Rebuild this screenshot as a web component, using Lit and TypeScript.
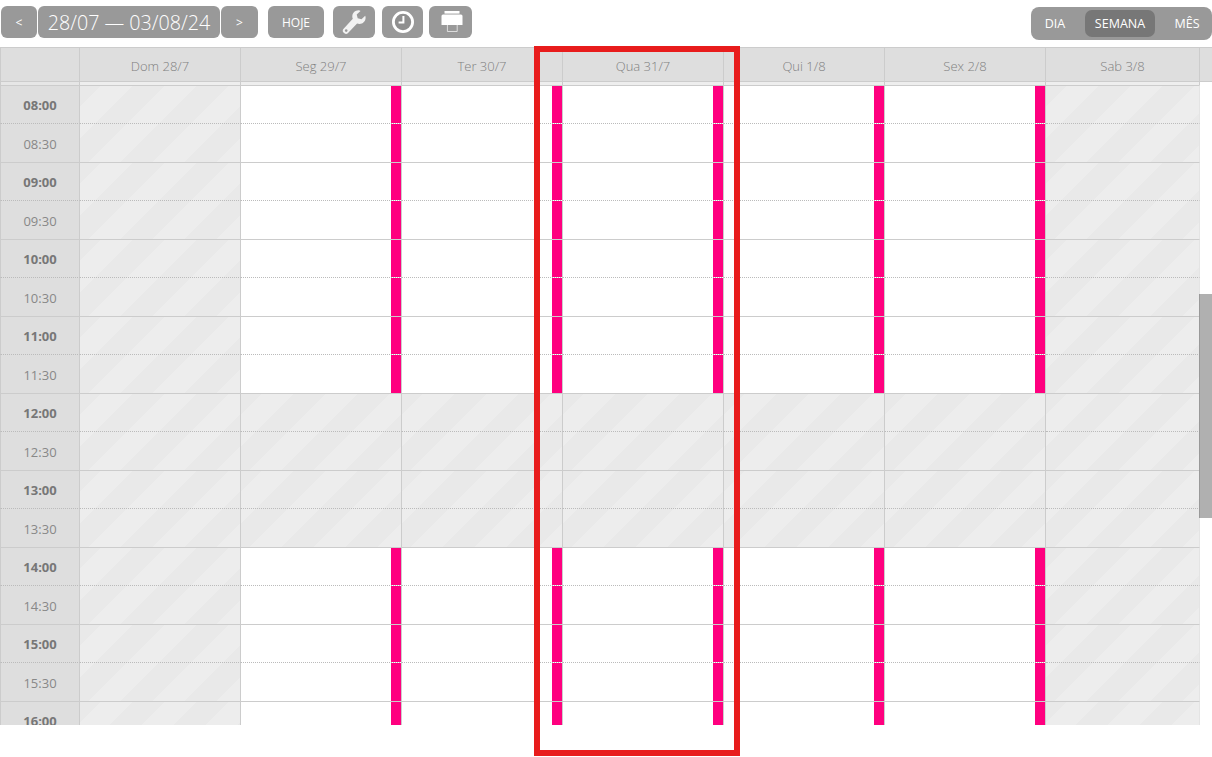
import { LitElement, html, css, svg } from "lit";
import { customElement } from "lit/decorators.js";

const DAYS = ["Dom 28/7", "Seg 29/7", "Ter 30/7", "Qua 31/7", "Qui 1/8", "Sex 2/8", "Sab 3/8"];
const SLOTS: string[] = [];
for (let h = 8; h <= 16; h++) {
  const hh = String(h).padStart(2, "0");
  SLOTS.push(`${hh}:00`);
  if (h < 16) SLOTS.push(`${hh}:30`);
}

const wrench = svg`<svg class="ic" width="24" height="26" viewBox="0 0 24 26"><path fill="#f2f2f2" d="M16.600 1.200c-3.600 0-6.300 2.900-6.300 6.200 0 .9.200 1.600.5 2.400L1.400 19.900c-.9 1-.9 2.600.1 3.500l.9.9c1 .9 2.500.9 3.400-.1l9.300-9.700c.7.300 1.500.4 2.300.4 3.500 0 6.200-2.800 6.200-6.200 0-.8-.1-1.400-.4-2l-3.700 3.600-3.800-1-1-3.700 3.800-3.600c-.6-.4-1.200-.8-1.900-.8z"/><circle cx="4.200" cy="21.600" r="1.300" fill="#999"/></svg>`;
const clock = svg`<svg class="ic" width="24" height="24" viewBox="0 0 24 24"><circle cx="12" cy="12" r="9.600" fill="#8f8f8f" stroke="#fff" stroke-width="2.800"/><path d="M12.400 6v6.600H7.600" fill="none" stroke="#fff" stroke-width="2"/></svg>`;
const printer = svg`<svg class="ic" width="24" height="24" viewBox="0 0 24 24"><path fill="#fff" d="M5.500 1h15v2.600h-15z"/><path fill="#fff" d="M4 4.600h18a1.500 1.500 0 0 1 1.500 1.500V15h-21V6.100A1.500 1.500 0 0 1 4 4.600z"/><path fill="none" stroke="#eee" stroke-width=".8" d="M8.400 15v6.500h9.800V15"/></svg>`;

@customElement("app-root")
export class AppRoot extends LitElement {
  static styles = css`
    :host {
      display: block;
      position: relative;
      width: 1212px;
      height: 757px;
      overflow: hidden;
      background: #fff;
      font-family: "Open Sans", "Liberation Sans", sans-serif;
      color: #888;
    }
    .toolbar {
      height: 47px;
      box-sizing: border-box;
      display: flex;
      align-items: flex-start;
      padding: 6px 0 0 1px;
    }
    .btn {
      height: 32px;
      background: #999;
      color: #fff;
      border-radius: 6px;
      display: flex;
      align-items: center;
      justify-content: center;
      box-sizing: border-box;
      flex: none;
    }
    .nav { width: 36px; font-size: 12px; }
    .next { width: 37px; margin-left: 1px; }
    .range { width: 182px; margin-left: 1px; font-size: 19.700px; font-weight: 300; }
    .today { width: 56px; margin-left: 10px; font-size: 12px; }
    .wr { width: 42px; margin-left: 9px; }
    .cl { width: 41px; margin-left: 7px; }
    .pr { width: 43px; margin-left: 6px; }
    .views {
      margin-left: auto;
      margin-top: 1px;
      width: 181px;
      height: 33px;
      flex: none;
      border-radius: 8px;
      background: #999;
      color: #fff;
      font-size: 12.500px;
      display: flex;
      align-items: center;
      padding-left: 3px;
      box-sizing: border-box;
    }
    .view { flex: none; display: flex; align-items: center; justify-content: center; height: 27px; }
    .v-dia { width: 42px; }
    .v-sem { width: 70px; margin-left: 9px; background: #777; border-radius: 7px; }
    .v-mes { width: 64px; }
    .cols {
      display: grid;
      grid-template-columns: 80px repeat(6, 161px) 154px;
      width: 1200px;
    }
    .head-wrap { background: #dedede; border-top: 1px solid #ccc; border-bottom: 1px solid #ccc; height: 35px; box-sizing: border-box; }
    .hc {
      height: 33px;
      box-sizing: border-box;
      padding-top: 2px;
      border-right: 1px solid #ccc;
      display: flex;
      align-items: center;
      justify-content: center;
      font-size: 13px;
      font-weight: 300;
      color: #808080;
    }
    .hc.first { border-left: 1px solid #ccc; }
    .strip { height: 3px; box-sizing: border-box; background: #eee; border-right: 1px solid #ccc; }
    .strip.first { background: #e6e6e6; border-left: 1px solid #ccc; }
    .body { height: 640px; overflow: hidden; }
    .cell {
      height: 38px;
      box-sizing: border-box;
      border-top: 1px solid #ccc;
      border-right: 1px solid #ccc;
      display: flex;
      justify-content: flex-end;
    }
    .half { height: 39px; border-top: 1px dotted #bbb; }
    .off {
      background-color: #e9e9e9;
      background-image: linear-gradient(135deg, #ededed 25%, #e9e9e9 25%, #e9e9e9 50%, #ededed 50%, #ededed 75%, #e9e9e9 75%);
      background-size: 64px 64px;
      background-position: 20px 0;
    }
    .off.half { background-position: 20px -38px; }
    .last { border-right-color: #e4e4e4; }
    .bar { width: 10px; background: #ff007f; }
    .time {
      background: #dedede;
      border-left: 1px solid #ccc;
      align-items: center;
      justify-content: center;
      font-size: 13px;
      font-weight: 400;
      color: #888;
    }
    .time.half { padding-top: 2px; }
    .time.full { font-weight: 700; color: #777; }
    .thumb {
      position: absolute;
      left: 1199px;
      top: 294px;
      width: 13px;
      height: 224px;
      box-sizing: border-box;
      background: #b0b0b0;
      border-left: 1px solid #999;
    }
    .mark {
      position: absolute;
      left: 534px;
      top: 46px;
      width: 206px;
      height: 710px;
      box-sizing: border-box;
      border: 6px solid #e81c1c;
    }
  `;

  render() {
    return html`
      <div class="toolbar">
        <div class="btn nav">&lt;</div>
        <div class="btn range">28/07 — 03/08/24</div>
        <div class="btn nav next">&gt;</div>
        <div class="btn today">HOJE</div>
        <div class="btn wr">${wrench}</div>
        <div class="btn cl">${clock}</div>
        <div class="btn pr">${printer}</div>
        <div class="views">
          <div class="view v-dia">DIA</div>
          <div class="view v-sem">SEMANA</div>
          <div class="view v-mes">MÊS</div>
        </div>
      </div>
      <div class="head-wrap">
        <div class="cols">
          <div class="hc first"></div>
          ${DAYS.map((d) => html`<div class="hc">${d}</div>`)}
        </div>
      </div>
      <div class="cols">
        <div class="strip first"></div>
        ${DAYS.map(() => html`<div class="strip"></div>`)}
      </div>
      <div class="body">
        <div class="cols">
          ${SLOTS.map((t) => {
            const half = t.endsWith("30");
            const hour = parseInt(t, 10);
            const lunch = hour === 12 || hour === 13;
            return html`
              <div class="cell time ${half ? "half" : "full"}">${t}</div>
              ${DAYS.map((_, i) => {
                const weekend = i === 0 || i === 6;
                const off = weekend || lunch;
                return html`<div class="cell ${half ? "half" : ""} ${off ? "off" : ""} ${i === 6 ? "last" : ""}">
                  ${off ? "" : html`<div class="bar"></div>`}
                </div>`;
              })}
            `;
          })}
        </div>
      </div>
      <div class="thumb"></div>
      <div class="mark"></div>
    `;
  }
}
